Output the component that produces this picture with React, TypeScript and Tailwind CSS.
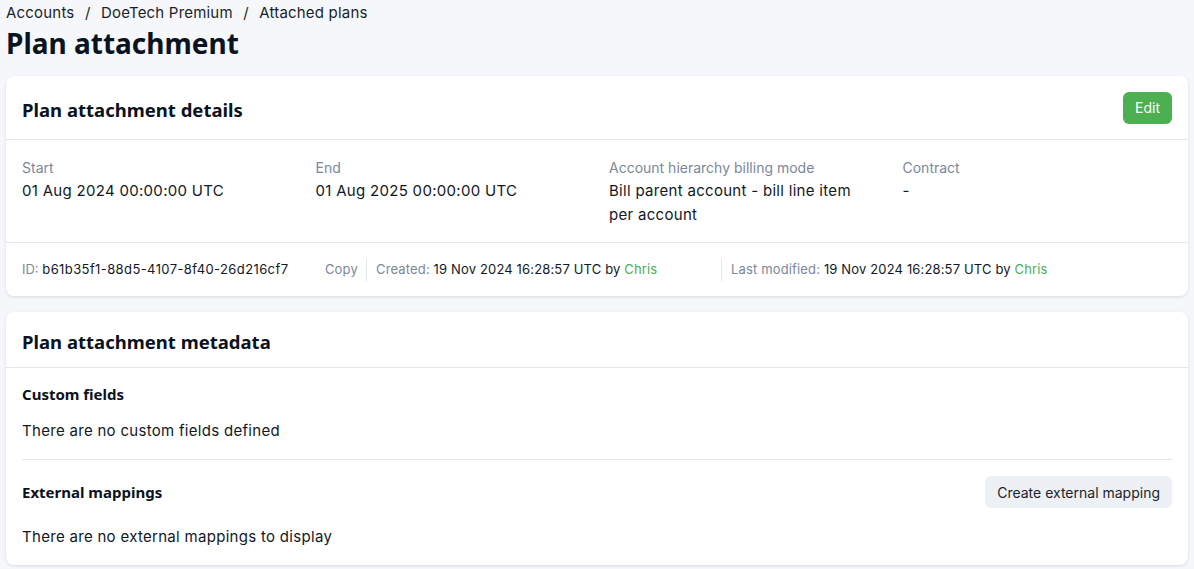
const body = "font-['Inter','Noto_Sans',sans-serif]";
const head = "font-['Noto_Sans','Open_Sans',sans-serif]";

const Detail = ({ label, value }: { label: string; value: string }) => (
  <div>
    <div className="text-[14px] leading-5 text-[#7b879b]">{label}</div>
    <div className="mt-[1px] text-[15px] leading-6 tracking-[0.3px] text-[#111827]">{value}</div>
  </div>
);

export default function App() {
  return (
    <div className={`min-h-screen bg-[#f5f7fa] px-[6px] pb-1 ${body}`}>
      <nav className="pt-[3px] text-[15px] leading-5 tracking-[0.2px] text-[#1a1f2b]">
        Accounts <span className="mx-1.5">/</span> DoeTech Premium <span className="mx-1.5">/</span> Attached plans
      </nav>
      <h1 className={`mt-[2px] text-[28px] font-bold leading-9 text-[#0b1220] ${head}`}>Plan attachment</h1>

      <section className="mt-[15px] rounded-lg bg-white shadow-[0_1px_3px_rgba(16,24,40,0.12)]">
        <header className="flex h-16 items-center justify-between border-b border-[#e3e8ef] px-4">
          <h2 className={`pt-1 text-[18.5px] font-bold text-[#0b1220] ${head}`}>Plan attachment details</h2>
          <button className="h-8 rounded-md bg-[#4caf50] px-3 text-[14px] text-white">Edit</button>
        </header>
        <div className="grid grid-cols-4 gap-6 border-b border-[#e3e8ef] px-4 pb-[15px] pt-[18px]">
          <Detail label="Start" value="01 Aug 2024 00:00:00 UTC" />
          <Detail label="End" value="01 Aug 2025 00:00:00 UTC" />
          <Detail label="Account hierarchy billing mode" value="Bill parent account - bill line item per account" />
          <Detail label="Contract" value="-" />
        </div>
        <div className="flex h-[53px] items-center px-4 text-[13px] text-[#111827]">
          <div className="flex w-[344px] items-center">
            <span className="text-[#7b879b]">ID:&nbsp;</span>
            <span className="tracking-[0.4px]">b61b35f1-88d5-4107-8f40-26d216cf7</span>
            <span className="ml-auto pr-2 tracking-[0.2px] text-[#7b879b]">Copy</span>
          </div>
          <span className="h-[22px] border-l border-[#e3e8ef]" />
          <span className="w-[354px] pl-[9px] tracking-[0.15px]">
            <span className="text-[#7b879b]">Created: </span>19 Nov 2024 16:28:57 UTC by{" "}
            <span className="text-[#4caf50]">Chris</span>
          </span>
          <span className="h-[22px] border-l border-[#e3e8ef]" />
          <span className="pl-[9px] tracking-[0.15px]">
            <span className="text-[#7b879b]">Last modified: </span>19 Nov 2024 16:28:57 UTC by{" "}
            <span className="text-[#4caf50]">Chris</span>
          </span>
        </div>
      </section>

      <section className="mt-4 rounded-lg bg-white shadow-[0_1px_3px_rgba(16,24,40,0.12)]">
        <header className="flex h-[56px] items-center border-b border-[#e3e8ef] px-4">
          <h2 className={`pt-1 text-[18.5px] font-bold text-[#0b1220] ${head}`}>Plan attachment metadata</h2>
        </header>
        <div className="px-4">
          <div className="border-b border-[#e3e8ef] pb-[16px] pt-[14px]">
            <h3 className={`text-[15px] font-bold leading-6 text-[#0b1220] ${head}`}>Custom fields</h3>
            <p className="mt-[13px] text-[15px] leading-6 tracking-[0.3px] text-[#111827]">There are no custom fields defined</p>
          </div>
          <div className="pb-[16px] pt-[16px]">
            <div className="flex items-center justify-between">
              <h3 className={`text-[15px] font-bold leading-6 text-[#0b1220] ${head}`}>External mappings</h3>
              <button className="h-8 rounded-md bg-[#edf1f5] px-3 text-[14px] text-[#1a1f2b]">Create external mapping</button>
            </div>
            <p className="mt-[17px] text-[15px] leading-6 tracking-[0.3px] text-[#111827]">There are no external mappings to display</p>
          </div>
        </div>
      </section>
    </div>
  );
}
